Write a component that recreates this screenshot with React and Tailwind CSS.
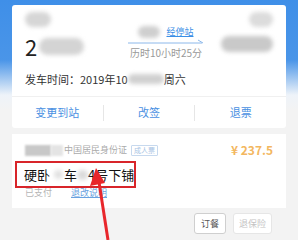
import React from "react";

const Blur = ({ className }) => (
  <div className={"shrink-0 rounded-full bg-[#c9c9c9] blur-[2px] " + className} />
);

export default function App() {
  return (
    <div
      className="relative w-[298px] h-[240px] overflow-hidden bg-[linear-gradient(#3f8fe8_0px,#4a95e8_60px,#eef3f9_95px,#f3f3f3_110px)] px-[12px] pt-[5px]"
      style={{ fontFamily: '"Noto Sans CJK SC", "Noto Sans", sans-serif' }}
    >
      {/* Card 1 */}
      <div className="bg-white rounded-[3px] h-[123px] flex flex-col">
        <div className="flex px-[13px] pt-[7px] h-[60px]">
          <div className="flex flex-col w-[90px]">
            <Blur className="w-[26px] h-[15px] rounded-[2px] bg-[#d6d6d6]" />
            <div className="flex items-center mt-[8px]">
              <span className="text-[22px] leading-[22px] text-[#222]">2</span>
              <Blur className="ml-[2px] w-[45px] h-[17px] rounded-[4px] bg-[#d4d4d4]" />
            </div>
          </div>
          <div className="flex flex-col items-center w-[78px] ml-[12px] pt-[14px]">
            <div className="flex items-center gap-[6px]">
              <Blur className="w-[22px] h-[12px] bg-[#cfcfcf]" />
              <span className="text-[9px] leading-[10px] text-[#3a8ee6] underline">经停站</span>
            </div>
            <svg width="76" height="5" className="mt-[1px]">
              <line x1="0" y1="4" x2="74" y2="4" stroke="#8cb8ea" strokeWidth="1" />
              <line x1="70" y1="1" x2="75" y2="4" stroke="#8cb8ea" strokeWidth="1" />
            </svg>
            <span className="text-[10px] leading-[12px] text-[#999] mt-[3px] whitespace-nowrap">历时10小时25分</span>
          </div>
          <div className="flex flex-col items-end flex-1">
            <Blur className="w-[24px] h-[15px] rounded-[2px] bg-[#dcdcdc]" />
            <Blur className="mt-[9px] w-[52px] h-[16px] rounded-[5px] bg-[#c6c6c6]" />
          </div>
        </div>
        <div className="flex items-center px-[13px] mt-[7px] text-[11px] leading-[14px] text-[#333] whitespace-nowrap">
          <span>发车时间：2019年10</span>
          <Blur className="w-[36px] h-[10px] bg-[#d0d0d0]" />
          <span>周六</span>
        </div>
        <div className="mt-[10px] h-px bg-[#f0f0f0]" />
        <div className="flex flex-1 items-center text-[11px] text-[#4a90e2]">
          <div className="flex-1 text-center">变更到站</div>
          <div className="w-px h-[16px] bg-[#e6e6e6]" />
          <div className="flex-1 text-center">改签</div>
          <div className="w-px h-[16px] bg-[#e6e6e6]" />
          <div className="flex-1 text-center">退票</div>
        </div>
      </div>

      {/* Card 2 */}
      <div className="mt-[6px] bg-white h-[74px] flex flex-col pt-[9px]">
        <div className="flex items-center px-[13px] whitespace-nowrap">
          <div className="w-[26px] h-[11px] bg-[#c8c8c8] blur-[1px]" />
          <div className="w-[12px] h-[11px] bg-[#e4e4e4] blur-[1px]" />
          <span className="ml-[1px] text-[9px] leading-[12px] text-[#aaa]">中国居民身份证</span>
          <span className="ml-[4px] border border-[#c7d9ee] text-[7px] leading-[9px] px-[2px] text-[#a9c4e4] rounded-[1px]">成人票</span>
          <span className="ml-auto text-[12px] font-bold text-[#f3b760] leading-[14px]">¥ 237.5</span>
        </div>
        <div className="ml-[3px] mt-[4px] w-[121px] h-[27px] border-[2px] border-[#d8252a] flex items-center px-[7px] text-[13px] leading-[16px] text-[#111] whitespace-nowrap">
          <span>硬卧</span>
          <Blur className="ml-[4px] w-[9px] h-[9px] bg-[#e0e0e0]" />
          <span className="ml-[1px]">车</span>
          <Blur className="w-[11px] h-[10px] bg-[#dadada]" />
          <span>4号下铺</span>
        </div>
        <div className="flex items-center px-[13px] mt-[-1px] text-[9px] leading-[12px] whitespace-nowrap">
          <span className="text-[#b5b5b5]">已支付</span>
          <span className="ml-[19px] text-[#6aa2e0] underline">退改说明</span>
        </div>
      </div>

      {/* Bottom buttons */}
      <div className="flex justify-end gap-[7px] mt-[5px] pr-[14px]">
        <div className="w-[32px] h-[21px] border border-[#cfcfcf] rounded-[3px] bg-white flex items-center justify-center text-[9px] text-[#555]">订餐</div>
        <div className="w-[39px] h-[21px] border border-[#e6e6e6] rounded-[3px] bg-white flex items-center justify-center text-[9px] text-[#c4c4c4]">退保险</div>
      </div>

      {/* Red arrow overlay */}
      <svg className="absolute left-0 top-0" width="298" height="240">
        <line x1="108" y1="240" x2="99" y2="182" stroke="#e8262b" strokeWidth="3" />
        <polygon points="96,168 90,186 105,183" fill="#e8262b" />
      </svg>
    </div>
  );
}
